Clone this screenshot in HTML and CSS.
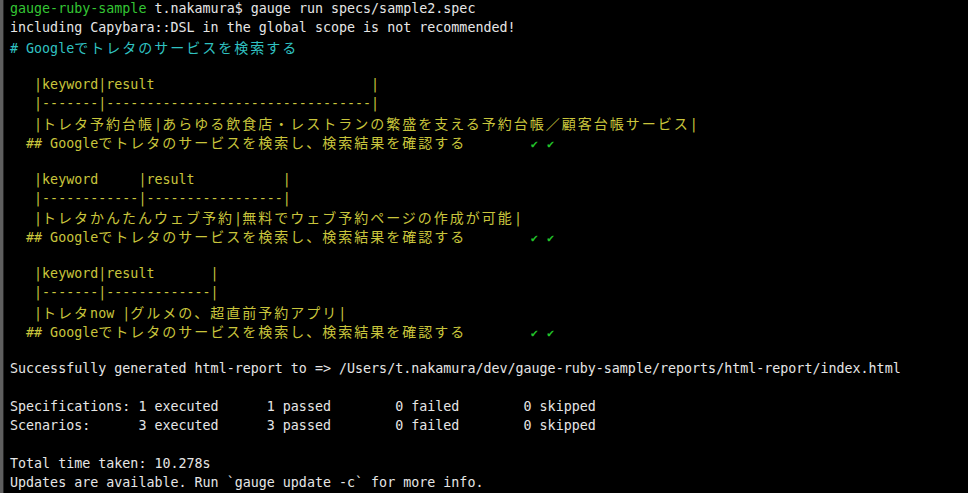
FILE: index.html
```html
<!DOCTYPE html>
<html lang="ja">
<head>
<meta charset="utf-8">
<title>gauge run</title>
<link rel="stylesheet" href="styles.css">
</head>
<body>
<div class="term">
<div class="ln"><span class="g">gauge-ruby-sample</span> t.nakamura$ gauge run specs/sample2.spec</div>
<div class="ln">including Capybara::DSL in the global scope is not recommended!</div>
<div class="ln c"># Google<span class="j">でトレタのサービスを検索する</span></div>
<div class="ln"></div>
<div class="ln y">   |keyword|result                           |</div>
<div class="ln y">   |-------|---------------------------------|</div>
<div class="ln y">   |<span class="j">トレタ予約台帳</span>|<span class="j">あらゆる飲食店・レストランの繁盛を支える予約台帳／顧客台帳サービス</span>|</div>
<div class="ln y">  ## Google<span class="j">でトレタのサービスを検索し、検索結果を確認する</span>        <span class="ok">✔</span> <span class="ok">✔</span></div>
<div class="ln"></div>
<div class="ln y">   |keyword     |result           |</div>
<div class="ln y">   |------------|-----------------|</div>
<div class="ln y">   |<span class="j">トレタかんたんウェブ予約</span>|<span class="j">無料でウェブ予約ページの作成が可能</span>|</div>
<div class="ln y">  ## Google<span class="j">でトレタのサービスを検索し、検索結果を確認する</span>        <span class="ok">✔</span> <span class="ok">✔</span></div>
<div class="ln"></div>
<div class="ln y">   |keyword|result       |</div>
<div class="ln y">   |-------|-------------|</div>
<div class="ln y">   |<span class="j">トレタ</span>now |<span class="j">グルメの、超直前予約アプリ</span>|</div>
<div class="ln y">  ## Google<span class="j">でトレタのサービスを検索し、検索結果を確認する</span>        <span class="ok">✔</span> <span class="ok">✔</span></div>
<div class="ln"></div>
<div class="ln">Successfully generated html-report to =&gt; /Users/t.nakamura/dev/gauge-ruby-sample/reports/html-report/index.html</div>
<div class="ln"></div>
<div class="ln">Specifications: 1 executed      1 passed        0 failed        0 skipped</div>
<div class="ln">Scenarios:      3 executed      3 passed        0 failed        0 skipped</div>
<div class="ln"></div>
<div class="ln">Total time taken: 10.278s</div>
<div class="ln">Updates are available. Run `gauge update -c` for more info.</div>
</div>
</body>
</html>
```
FILE: styles.css
```css
html, body {
  margin: 0;
  padding: 0;
  background: #000;
  height: 100%;
  overflow: hidden;
}
.term {
  box-sizing: border-box;
  height: 493px;
  border-left: 3px solid #5f5f5f;
  box-shadow: inset 1px 0 0 #262626;
  padding: 0 0 0 7px;
  font-family: "DejaVu Sans Mono", "Liberation Mono", monospace;
  font-size: 13.33px;
  line-height: 18.96px;
  color: #e6e6e6;
}
.ln {
  height: 18.96px;
  white-space: pre;
  overflow: visible;
}
.g { color: #34c634; }
.c { color: #30c2c2; }
.y { color: #c9c53c; }
.j {
  font-family: "Noto Sans CJK JP", sans-serif;
  font-size: 14px;
  letter-spacing: 2px;
  line-height: 18.96px;
}
.ok {
  display: inline-block;
  width: 8px;
  color: #22c22a;
  font-size: 12px;
  text-align: center;
}
```
